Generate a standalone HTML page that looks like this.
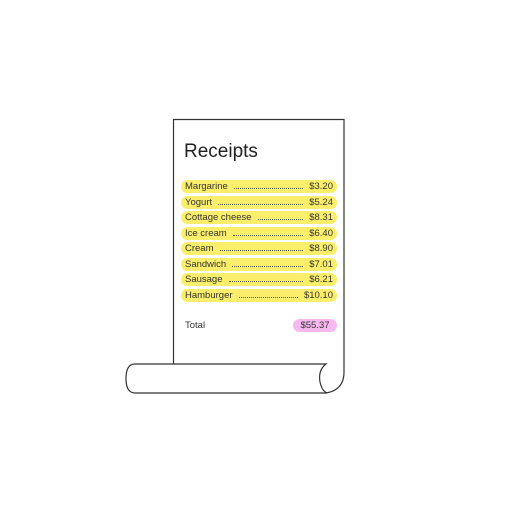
<html><body style="margin:0;width:512px;height:512px;background:#fff;position:relative;font-family:'Liberation Sans',sans-serif;overflow:hidden">
<svg width="512" height="512" style="position:absolute;left:0;top:0" fill="none" stroke="#333" stroke-width="1.2">
<path d="M173.5 364 V119.5 H344 V372 Q344 390 326 393"/>
<path d="M135 364 H326 Q318 370 320 382 Q322 391 327 393 H135 Q126 393 126 378.5 Q126 364 135 364 Z" fill="#fff"/>
</svg>
<div style="position:absolute;left:184px;top:141px;font-size:19px;color:#222">Receipts</div>
<div id="rows" style="position:absolute;left:181px;top:180px;width:156px;font-size:9.5px;color:#333"></div>
<div style="position:absolute;left:185px;top:320px;font-size:9.5px;color:#333">Total</div>
<div style="position:absolute;left:293px;top:319px;width:44px;height:13px;border-radius:7px;background:#f6b8ee;font-size:9.5px;color:#333;text-align:center;line-height:13px">$55.37</div>
<script>
var d=[["Margarine","$3.20"],["Yogurt","$5.24"],["Cottage cheese","$8.31"],["Ice cream","$6.40"],["Cream","$8.90"],["Sandwich","$7.01"],["Sausage","$6.21"],["Hamburger","$10.10"]];
var h="";d.forEach(function(r,i){h+='<div style="position:absolute;left:0;top:'+(i*15.5)+'px;width:156px;height:13px;border-radius:7px;background:#fbee6a;line-height:13px;display:flex"><span style="padding-left:4px">'+r[0]+'</span><span style="flex:1;margin:0 6px;border-bottom:1px dotted #555;height:8px"></span><span style="padding-right:4px">'+r[1]+'</span></div>'});
document.getElementById("rows").innerHTML=h;
</script>
</body></html>
